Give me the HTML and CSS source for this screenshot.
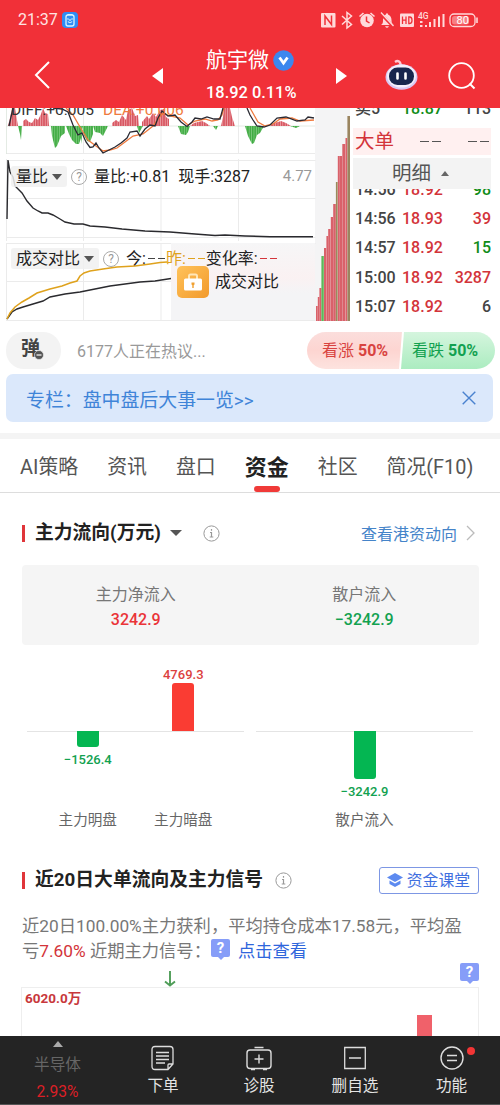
FILE: index.html
```html
<!DOCTYPE html>
<html lang="zh-CN">
<head>
    <meta charset="UTF-8">
    <meta name="viewport" content="width=device-width, initial-scale=1.0">
    <title>航宇微 18.92 0.11%</title>
    <link rel="stylesheet" href="styles.css">
</head>
<body>
    <header class="header">
        <div class="status">
            <span class="clock">21:37</span>
            <svg class="app-badge" width="16" height="16" viewBox="0 0 16 16">
                <rect width="16" height="16" rx="4" fill="#2f8cf5"/>
                <rect x="4" y="3" width="8" height="11" rx="2" fill="none" stroke="#d8f4ff" stroke-width="1.3"/>
                <path d="M5.5 2.5h5M5.5 6.5l1 1M10.5 6.5l-1 1M6 9.5q2 2.5 4 0M8 7v2" fill="none" stroke="#d8f4ff" stroke-width="1.2"/>
            </svg>
            <svg class="status-icons" width="160" height="20" viewBox="320 10 160 20">
                <g fill="#ffd9da">
                    <rect x="321" y="13" width="14.5" height="14.5" rx="1"/>
                    <path d="M325 25v-9l6.5 8.500v-9" fill="none" stroke="#f13038" stroke-width="1.5"/>
                    <path d="M342 16l9.5 8.500-4.500 3.500V12.500l4.500 3.500-9.500 8.500" fill="none" stroke="#ffd9da" stroke-width="1.5"/>
                    <circle cx="367" cy="20.5" r="6.8"/>
                    <path d="M359.500 16.500l4-3.500M374.500 16.500l-4-3.500" stroke="#ffd9da" stroke-width="1.6"/>
                    <path d="M366.500 16.500v4.500l3 2" fill="none" stroke="#f13038" stroke-width="1.5"/>
                    <path d="M381 25c2-1 2-3 2-5.500 0-3 1.500-4.500 3-5v-1h2v1c2.500 1 3.500 3 3.500 5.500 0 2 .5 4 2 5zM385 26.200h4q-2 3-4 0z"/>
                    <path d="M380 13l13.500 14" stroke="#f13038" stroke-width="2.6"/>
                    <path d="M381 12.500l12.500 13.500" stroke="#ffd9da" stroke-width="1.3"/>
                    <rect x="400" y="13.5" width="14" height="13.5" rx="1"/>
                    <path d="M402.500 16.500v7.500M406 16.500v7.500M402.500 20.200h3.500M408.800 17v6.500h1q2.200 0 2.200-3.200t-2.200-3.300z" fill="none" stroke="#f13038" stroke-width="1.3"/>
                    <path d="M420 21h2.500v2H420zM420 25h2.500v2H420zM425 25h2v2h-2zM429 22h2v5h-2zM433.500 19h2v8h-2zM438 16.500h2V27h-2zM442.500 14h2v13h-2z"/>
                    <rect x="450" y="14" width="25" height="12.5" rx="4" fill="none" stroke="#ffd9da" stroke-width="1.3"/>
                    <rect x="452" y="16" width="17" height="8.5" rx="2.5" fill="#f77f83"/>
                    <path d="M477 17.500v5.500" stroke="#ffd9da" stroke-width="1.6"/>
                </g>
                <text x="418" y="18.5" class="tiny-net">4G</text>
                <text x="456.500" y="24.2" class="tiny-batt">80</text>
            </svg>
        </div>
        <div class="titlebar">
            <svg width="18" height="30" viewBox="0 0 18 30"><path d="M16 2L3 15l13 13" fill="none" stroke="#fff" stroke-width="2"/></svg>
            <svg class="prev" width="11" height="16" viewBox="0 0 11 16"><path d="M11 0v16L0 8z" fill="#fff"/></svg>
            <div class="stock">
                <div class="name">航宇微
                    <svg width="21" height="21" viewBox="0 0 21 21">
                        <circle cx="10.5" cy="10.5" r="10.3" fill="#3c87ee"/>
                        <path d="M6.500 7.500l4 5.500 4-5.500" fill="none" stroke="#fff" stroke-width="2.8"/>
                    </svg>
                </div>
                <div class="quote">18.92 0.11%</div>
            </div>
            <svg class="next" width="11" height="16" viewBox="0 0 11 16"><path d="M0 0v16l11-8z" fill="#fff"/></svg>
            <svg class="robot" width="33" height="32" viewBox="0 0 33 32">
                <path d="M10 3q3-2 5 .5l1 3" fill="none" stroke="#ffc9d4" stroke-width="2.4"/>
                <ellipse cx="16.5" cy="18" rx="16" ry="12.8" fill="#d9c8f3"/>
                <ellipse cx="16.5" cy="17" rx="14.5" ry="11.5" fill="#f3effc"/>
                <rect x="4" y="8.5" width="25" height="17.5" rx="8.5" fill="#18264d"/>
                <path d="M12.500 14.500v5M20.500 14.500v5" stroke="#fff" stroke-width="2.6" stroke-linecap="round"/>
            </svg>
            <svg class="search" width="28" height="28" viewBox="0 0 28 28">
                <circle cx="13.5" cy="13.5" r="12.3" fill="none" stroke="#fff" stroke-width="1.8"/>
                <path d="M21.500 21.500l5 5" stroke="#fff" stroke-width="2"/>
            </svg>
        </div>
    </header>

    <section class="market">
        <div class="charts">
            <div class="panel macd">
                <svg class="plot" width="316" height="46" viewBox="0 108 316 46">
                    <defs>
                        <pattern id="gbar" width="2.4" height="10" patternUnits="userSpaceOnUse">
                            <rect width="2.4" height="10" fill="#7cc87c"/><rect width="1.5" height="10" fill="#3fab42"/>
                        </pattern>
                        <pattern id="rbar" width="2.4" height="10" patternUnits="userSpaceOnUse">
                            <rect width="2.4" height="10" fill="#eda0a6"/><rect width="1.6" height="10" fill="#d75862"/>
                        </pattern>
                    </defs>
                    <path d="M83.500 108v46M161 108v46M238.500 108v46M6 153.500h309.500" stroke="#ebebeb"/>
                    <path d="M6.500 154V108M6 126h309" stroke="#dde6dd" stroke-width=".8" fill="none"/>
                    <path fill="url(#rbar)" d="M8 126l2-8 2-10h3l2 12 1 6zM23 126v-5l3-2 3 3 3 1 3-5 3 2 3-6 2-6 2 5 3 1 1 12zM112 126v-3l4-3 3 2 3-7 4 5 2-10 4-2 3 8 3-1 1 11zM142 126v-4l5-6 2 3 4-6 3 4 4-7 4-1 2 8 3 2v7zM190 126l4-3 4-1 4-1 4 2 4 3zM221 126l2-9 1-9h6l2 9 3 9zM270 126l4-3 4-1 3-1 5 2 5 3z"/>
                    <path fill="url(#gbar)" d="M18 126l2 8 1 6 1-14zM51 126l1 10 3 12 2-2 4-10 4-3v-7zM66 126l3 8 3 6 4 4h3l2-6 1 6v-18zM82 126l2 9 3 6 3 1 3-8v-8zM93 126l2 6 5 1 3 3 2-4 3-6zM137 126h6l-4 7zM178 126l3 8 5 1 2-3 2-6zM245 126l3 10 4 8 2-1 3-8 3-2 4-7zM213 126h5l-2 4zM290 126h10l-4 2z"/>
                    <g fill="none" stroke-width="1.300">
                        <path stroke="#ef7a3e" d="M66 108L73 115 80 127 88 140 96 146 103 151 110 150 117 148 125 142 133 136 143 134 148 130 153 126 158 119 163 113 170 116 180 118 188 125 195 121 205 119 212 121 218 120 222 115 224 108M250 108L254 115 258 122 265 126 273 124 280 119 292 118 300 121 314 120"/>
                        <path stroke="#2a2a33" d="M9 126L13 108M53 108L62 109 68 112 73 125 78 135 82 133 86 142 90 147.500 93 147 96 143 99 148 103 153 109 150 115 147 121 143 127 138 130 132 137 131 140 136 145 129 150 125 155 126 158 118 162 111 168 116 175 115 181 122 187 126.500 192 122 195 118 201 119 207 117 214 119 220 119 223 108M247 108L250 115 253 120 257 126 264 127 270 125 277 118 286 117 297 121 305 120 308 117 314 118"/>
                    </g>
                </svg>
                <div class="macd-text"><span>DIFF:+0.005</span><span class="dea">DEA:+0.006</span></div>
            </div>

            <div class="panel ratio">
                <svg class="plot" width="316" height="82" viewBox="0 159 316 82">
                    <path d="M6.500 159v82M83.500 159v82M161 159v82M238.500 159v82M6 160.500h309.500M6 198.500h309.500M6 237.500h309.500" stroke="#ebebeb" fill="none"/>
                    <path fill="none" stroke="#2a2a2e" stroke-width="1.400" d="M7 219L8 160 10 172 13 177 15 186 22 193 27 201 33 208 38 211 42 213 48 213 53 215 60 219 65 222 74 224 83 224 90 226 105 227 122 229 145 231 170 232 195 234 215 235.500 225 235 245 236 270 236.700 313 236.700"/>
                </svg>
                <div class="legend">
                    <span class="picker">量比<i class="down"></i></span>
                    <span class="help">?</span>
                    <span>量比:+0.81</span>
                    <span class="hand">现手:3287</span>
                    <span class="max">4.77</span>
                </div>
            </div>

            <div class="panel compare">
                <svg class="plot" width="316" height="78" viewBox="0 243 316 78">
                    <path d="M6.500 243v78M83.500 243v78M161 243v78M6 243.500h309.500M6 281.500h165M6 320.500h309.500" stroke="#ebebeb" fill="none"/>
                    <path fill="none" stroke="#2a2a2e" stroke-width="1.400" d="M7 319L12 312 17 309 23 307 33 304 43 301 50 297 65 294 80 292 95 289 110 286 125 284 140 282 155 281 171 278.500"/>
                </svg>
                <div class="locked">
                    <span class="lock">
                        <svg width="32" height="32" viewBox="0 0 32 32">
                            <path d="M12 13v-3q0-1.500 1.500-1.500h5Q20 8.500 20 10v3" fill="none" stroke="#ffe6b8" stroke-width="2"/>
                            <rect x="7" y="12.5" width="18" height="12" rx="1.5" fill="#fff"/>
                            <path d="M14.500 16.500h3v2l-.8.800V22h-1.400v-2.700l-.8-.8z" fill="#f0a030"/>
                        </svg>
                    </span>
                    成交对比
                </div>
                <div class="legend">
                    <span class="picker">成交对比<i class="down"></i></span>
                    <span class="help">?</span>
                    <span class="line3">今:<em class="dash"></em><b class="yest">昨:</b><em class="dash gold"></em>变化率:<em class="dash red"></em></span>
                </div>
                <svg class="plot" width="171" height="78" viewBox="0 243 171 78">
                    <path fill="none" stroke="#dfa21d" stroke-width="1.500" d="M7 319L10 313 15 307 22 302 29 298 37 293 50 289 62 286 70 283 77 281 80 276 84 273 90 271 103 269 117 267 135 266 150 264 160 262.500 167 262"/>
                </svg>
            </div>
        </div>

        <svg class="depth" width="35" height="213" viewBox="315 108 35 213">
            <rect x="315" y="108" width="35" height="213" fill="#f4f4f5"/>
            <g fill="#d9616a">
                <rect x="316" y="306" width="1.7" height="15"/><rect x="317.800" y="297" width="1.6" height="24"/>
                <rect x="319.400" y="288" width="2" height="33"/>
                <rect x="324" y="248" width="2.2" height="73"/><rect x="326.400" y="236" width="1.8" height="85"/>
                <rect x="328.200" y="229" width="2.4" height="92"/><rect x="330.800" y="217" width="2.2" height="104"/>
                <rect x="333.200" y="204" width="2.6" height="117"/><rect x="337.800" y="156" width="2" height="165"/>
                <rect x="339.900" y="156" width="2.2" height="165"/><rect x="342.300" y="144" width="3" height="177"/>
                <rect x="345.500" y="138" width="1.8" height="183"/>
            </g>
            <rect x="321.400" y="256" width="2.4" height="65" fill="#5cb85a"/>
            <rect x="335.900" y="182" width="1.7" height="139" fill="#9a8a5c"/>
            <rect x="347.400" y="116" width="2.6" height="205" fill="#9a8560"/>
        </svg>

        <div class="orders">
            <div class="row top-row"><span>卖5</span><span class="g">18.87</span><span>113</span></div>
            <div class="big-order"><span>大单</span><em class="dash"></em><em class="dash"></em></div>
            <div class="detail">明细<i class="up"></i></div>
            <div class="trades">
                <div class="row"><span>14:56</span><span class="r">18.92</span><span class="g">98</span></div>
                <div class="row"><span>14:56</span><span class="r">18.93</span><span class="r">39</span></div>
                <div class="row"><span>14:57</span><span class="r">18.92</span><span class="g">15</span></div>
                <div class="row"><span>15:00</span><span class="r">18.92</span><span class="r">3287</span></div>
                <div class="row"><span>15:07</span><span class="r">18.92</span><span>6</span></div>
            </div>
        </div>
    </section>

    <section class="discuss">
        <div class="danmu">弹
            <svg width="10" height="10" viewBox="0 0 10 10"><circle cx="5" cy="5" r="4.5" fill="#555" stroke="#f3f3f3" stroke-width=".6"/><path d="M2.500 5h5" stroke="#fff" stroke-width="1.2"/></svg>
        </div>
        <div class="talk">6177人正在热议...</div>
        <div class="vote">
            <div class="bull">看涨 <b>50%</b></div>
            <div class="bear">看跌 <b>50%</b></div>
        </div>
    </section>

    <div class="banner">
        <span>专栏：盘中盘后大事一览&gt;&gt;</span>
        <svg width="14" height="14" viewBox="0 0 14 14"><path d="M.7.7l12.600 12.600M13.300.7L.7 13.300" stroke="#4a82cf" stroke-width="1.4"/></svg>
    </div>

    <nav class="tabs">
        <a>AI策略</a>
        <a>资讯</a>
        <a>盘口</a>
        <a class="active">资金</a>
        <a>社区</a>
        <a>简况(F10)</a>
    </nav>

    <section class="flow">
        <div class="heading">
            <h2>主力流向(万元)</h2>
            <i class="down"></i>
            <svg class="info" width="17" height="17" viewBox="0 0 17 17"><circle cx="8.5" cy="8.5" r="7.6" fill="none" stroke="#999" stroke-width="1"/><path d="M8.500 4v1.700M7 7.500h1.500v4M6.700 12h3.600" fill="none" stroke="#999" stroke-width="1.2"/></svg>
            <a class="more">查看港资动向
                <svg width="9" height="16" viewBox="0 0 9 16"><path d="M1 1l7 7-7 7" fill="none" stroke="#bbb" stroke-width="1.3"/></svg>
            </a>
        </div>
        <div class="summary">
            <div><p>主力净流入</p><strong class="red">3242.9</strong></div>
            <div><p>散户流入</p><strong class="green">−3242.9</strong></div>
        </div>
        <div class="bars">
            <div class="group">
                <div class="bar-col">
                    <div class="above"></div>
                    <div class="below"><i class="bar" style="height: 16px"></i><span>−1526.4</span></div>
                    <p>主力明盘</p>
                </div>
                <div class="bar-col">
                    <div class="above"><span>4769.3</span><i class="bar" style="height: 48px"></i></div>
                    <div class="below"></div>
                    <p>主力暗盘</p>
                </div>
            </div>
            <div class="group">
                <div class="bar-col">
                    <div class="above"></div>
                    <div class="below"><i class="bar" style="height: 48px"></i><span>−3242.9</span></div>
                    <p>散户流入</p>
                </div>
            </div>
        </div>
    </section>

    <section class="signal">
        <div class="heading">
            <h2>近20日大单流向及主力信号</h2>
            <svg class="info" width="17" height="17" viewBox="0 0 17 17"><circle cx="8.5" cy="8.5" r="7.6" fill="none" stroke="#999" stroke-width="1"/><path d="M8.500 4v1.700M7 7.500h1.500v4M6.700 12h3.600" fill="none" stroke="#999" stroke-width="1.2"/></svg>
            <a class="course">
                <svg width="16" height="14" viewBox="0 0 16 14"><path d="M8 0l8 4.500L8 9 0 4.500z" fill="#5d8af0"/><path d="M2.500 7.500L8 10.500l5.500-3v3.500L8 14l-5.500-3z" fill="#5d8af0"/></svg>
                资金课堂
            </a>
        </div>
        <div class="desc">
            <div class="line">近20日100.00%主力获利，平均持仓成本17.58元，平均盈</div>
            <div class="line second">亏<span class="red">7.60%</span> 近期主力信号：<i class="tip">?</i><a>点击查看</a></div>
        </div>
        <div class="marks">
            <svg width="12" height="16" viewBox="0 0 12 16"><path d="M6 0v14M1 10.500l5 4 5-4" fill="none" stroke="#4f9d58" stroke-width="1.9"/></svg>
            <i class="tip">?</i>
        </div>
        <div class="history">
            <span>6020.0万</span>
            <i class="day"></i>
        </div>
    </section>

    <footer class="toolbar">
        <div class="sector">
            <i class="up"></i>
            <span>半导体</span>
            <b>2.93%</b>
        </div>
        <div class="tool">
            <svg width="24" height="26" viewBox="0 0 24 26"><path d="M4 1.500h15q3 0 3 3V19l-5 5.500H4q-3 0-3-3v-17q0-3 3-3zM22 19h-4q-1 0-1 1v4M5 7.500h13M5 11h13M5 14.500h13M5 18h9" fill="none" stroke="#ddd" stroke-width="1.3"/></svg>
            下单
        </div>
        <div class="tool">
            <svg width="26" height="26" viewBox="0 0 26 26"><rect x="1" y="5" width="24" height="18.5" rx="3" fill="none" stroke="#ddd" stroke-width="1.4"/><path d="M8.500 2.500h9M13 9.500v9M8.500 14h9M5 24.500h4M17 24.500h4" stroke="#ddd" stroke-width="1.4"/></svg>
            诊股
        </div>
        <div class="tool">
            <svg width="24" height="26" viewBox="0 0 24 26"><path d="M1.700 2.500h20.600v21H1.700zM6 13h12" fill="none" stroke="#ddd" stroke-width="1.3"/></svg>
            删自选
        </div>
        <div class="tool">
            <svg width="26" height="26" viewBox="0 0 26 26"><circle cx="13" cy="13" r="11" fill="none" stroke="#ddd" stroke-width="1.4"/><path d="M8 10.500h10M8 15.500h10" stroke="#ddd" stroke-width="1.4"/></svg>
            功能
            <i class="dot"></i>
        </div>
    </footer>
</body>
</html>
```
FILE: styles.css
```css
* {
    margin: 0;
    padding: 0;
    box-sizing: border-box;
}
body {
    width: 500px;
    height: 1105px;
    overflow: hidden;
    background: #fff;
    color: #333;
    font-family: Roboto, "Noto Sans CJK SC", sans-serif;
    white-space: nowrap;
}
svg {
    display: block;
    flex-shrink: 0;
}
i, em {
    font-style: normal;
}
.red, .r {
    color: #d3343a;
}
.green {
    color: #12a150;
}
.g {
    color: #108c18;
}
.down, .up {
    display: block;
    border: 5px solid transparent;
    border-top: 6px solid #555;
    border-bottom: 0;
}
.up {
    border-top: 0;
    border-bottom: 6px solid #666;
}

/* header */
.header {
    height: 108px;
    background: #f13038;
    color: #fff;
}
.status {
    height: 40px;
    padding: 0 20px 0 18px;
    display: flex;
    align-items: center;
}
.clock {
    font-size: 16px;
    line-height: 20px;
    color: #ffe3e3;
    width: 44px;
}
.status-icons {
    margin-left: auto;
}
.tiny-net {
    font-size: 8.5px;
    fill: #ffd9da;
    font-weight: 500;
}
.tiny-batt {
    font-size: 11px;
    fill: #fff;
}
.titlebar {
    height: 68px;
    padding: 3px 24px 0 33px;
    display: flex;
    align-items: flex-start;
}
.titlebar > svg {
    margin-top: 17px;
}
.titlebar .prev {
    margin: 25px 0 0 101px;
}
.stock {
    width: 131px;
    margin-left: 43px;
}
.name {
    display: flex;
    gap: 4px;
    font-size: 21px;
    line-height: 35px;
    height: 40px;
}
.name svg {
    margin-top: 7px;
}
.quote {
    font-size: 16.4px;
    line-height: 20px;
    font-weight: 500;
}
.titlebar .next {
    margin-top: 25px;
}
.titlebar .robot {
    margin: 16px 0 0 38px;
}
.titlebar .search {
    margin: 19px 0 0 30px;
}

/* charts and order list */
.market {
    height: 213px;
    display: flex;
    overflow: hidden;
}
.charts {
    width: 315px;
}
.panel {
    position: relative;
}
.plot {
    position: absolute;
    left: 0;
    top: 0;
}
.macd {
    height: 51px;
    overflow: hidden;
}
.ratio {
    height: 84px;
}
.compare {
    height: 78px;
}
.macd-text {
    position: relative;
    display: flex;
    gap: 9px;
    margin-top: -8px;
    padding-left: 11px;
    font-size: 15.5px;
    line-height: 20px;
}
.dea {
    color: #ef7a3e;
}
.legend {
    position: relative;
    display: flex;
    align-items: center;
    padding: 7px 3px 0 11px;
    font-size: 16px;
    line-height: 21px;
    color: #222;
}
.compare .legend {
    padding-top: 5px;
}
.picker {
    display: flex;
    align-items: center;
    gap: 4px;
    padding: 0 5px;
    background: rgba(240, 240, 240, 0.85);
    border-radius: 3px;
    margin-right: 4px;
}
.help {
    width: 16px;
    height: 16px;
    border: 1px solid #aaa;
    border-radius: 50%;
    color: #999;
    font-size: 12px;
    line-height: 15px;
    text-align: center;
    margin-right: 7px;
}
.hand {
    margin-left: 8px;
}
.max {
    margin-left: auto;
    color: #999;
    font-size: 15px;
}
.line3 {
    display: flex;
    align-items: center;
}
.yest {
    color: #dfa21d;
    font-weight: 400;
}
.dash {
    display: inline-block;
    width: 20px;
    height: 1.5px;
    background: repeating-linear-gradient(90deg, transparent 0 2px, #444 2px 9px, transparent 9px 10px);
}
.dash.gold {
    background: repeating-linear-gradient(90deg, transparent 0 2px, #dfa21d 2px 9px, transparent 9px 10px);
}
.dash.red {
    background: repeating-linear-gradient(90deg, transparent 0 2px, #d3343a 2px 9px, transparent 9px 10px);
}
.locked {
    position: absolute;
    left: 171px;
    top: 0;
    width: 144px;
    height: 77px;
    padding: 23px 0 0 6px;
    display: flex;
    gap: 6px;
    font-size: 16px;
    line-height: 31px;
    color: #222;
    background: linear-gradient(#f6f6f7, #faf1f2 45%, #f4f4f6 65%);
}
.lock {
    width: 32px;
    height: 32px;
    border-radius: 5px;
    background: linear-gradient(135deg, #ffc25a, #f29a2c);
}
.orders {
    width: 138px;
    margin-left: 3px;
}
.row {
    display: grid;
    grid-template-columns: 47px 48px 1fr;
    height: 29.2px;
    line-height: 29.2px;
    flex-shrink: 0;
    padding-left: 2px;
    font-size: 16px;
    font-weight: 500;
    color: #444;
}
.row span:last-child {
    text-align: right;
}
.top-row {
    height: 20px;
    line-height: 1px;
}
.big-order {
    height: 27px;
    padding-left: 2px;
    display: flex;
    align-items: center;
    background: #fff0f0;
    color: #d3343a;
    font-size: 19.5px;
    line-height: 26px;
}
.big-order .dash {
    width: 22px;
    height: 1.8px;
    background: repeating-linear-gradient(90deg, #555 0 9px, transparent 9px 12px);
    margin-left: 26px;
}
.detail {
    height: 31px;
    margin-top: 3px;
    padding-left: 39px;
    display: flex;
    align-items: center;
    gap: 10px;
    background: #f3f3f3;
    color: #555;
    font-size: 19.5px;
    line-height: 30px;
}
.detail .up {
    border-width: 0 4px 5px;
}
.trades {
    height: 132px;
    display: flex;
    flex-direction: column;
    justify-content: flex-end;
    overflow: hidden;
}

/* discussion */
.discuss {
    display: flex;
    height: 37px;
    margin: 11px 5px 0 6px;
    line-height: 37px;
}
.danmu {
    position: relative;
    width: 55px;
    padding-left: 15px;
    border-radius: 18px;
    background: #f3f3f3;
    color: #444;
    font-size: 19px;
    font-weight: 700;
    line-height: 34px;
}
.danmu svg {
    position: absolute;
    left: 28px;
    top: 18px;
}
.talk {
    margin-left: 16px;
    color: #999;
    font-size: 16px;
    line-height: 39px;
}
.vote {
    display: flex;
    margin-left: auto;
    width: 188px;
    border-radius: 19px;
    overflow: hidden;
    font-size: 16px;
}
.bull {
    width: 95px;
    padding-left: 15px;
    color: #d8433f;
    background: linear-gradient(#fbdedc, #fdd5d1 50%, #fde3df);
    clip-path: polygon(0 0, 100% 0, 92px 100%, 0 100%);
}
.bear {
    width: 95px;
    margin-left: -2px;
    padding-left: 12px;
    color: #12a150;
    background: linear-gradient(#d5f5de, #abecc0);
    clip-path: polygon(4px 0, 100% 0, 100% 100%, 1px 100%);
}
.banner {
    height: 48px;
    margin: 5px 7px 0 6px;
    padding: 0 17px 0 20px;
    display: flex;
    align-items: center;
    justify-content: space-between;
    border-radius: 7px;
    background: #dbe8fb;
    color: #3f84d8;
    font-size: 18.9px;
    line-height: 44px;
}
.banner span {
    padding-top: 5px;
}

/* tabs */
.tabs {
    height: 60px;
    margin-top: 11px;
    padding: 0 20px;
    display: flex;
    gap: 29px;
    border-top: 6px solid #f4f4f4;
    border-bottom: 1px solid #ddd;
    color: #555;
    font-size: 19.9px;
    line-height: 57px;
}
.tabs a {
    position: relative;
}
.tabs .active {
    color: #222;
    font-size: 22px;
    font-weight: 700;
}
.active::after {
    content: "";
    position: absolute;
    left: 9px;
    bottom: 0;
    width: 26px;
    height: 6px;
    border-radius: 3px;
    background: #f03a38;
}

/* fund flow */
.heading {
    height: 30px;
    display: flex;
    align-items: center;
    padding: 0 21px 0 22px;
}
.heading h2 {
    color: #222;
    font-size: 18.8px;
    line-height: 30px;
    font-weight: 700;
    display: flex;
    align-items: center;
}
.heading h2::before {
    content: "";
    width: 3px;
    height: 17px;
    margin-right: 10px;
    background: #e0353a;
}
.heading .down {
    border-width: 6px 6px 0;
    margin: 0 0 0 9px;
}
.flow .info {
    margin-left: 21px;
}
.signal .info {
    margin-left: 12px;
}
.flow {
    padding-top: 25px;
}
.more {
    margin-left: auto;
    margin-right: 4px;
    display: flex;
    align-items: center;
    gap: 9px;
    color: #4584c9;
    font-size: 16px;
}
.summary {
    display: flex;
    height: 80px;
    margin: 17px 21.5px 0;
    border-radius: 4px;
    background: #f5f5f5;
    text-align: center;
}
.summary div {
    flex: 1;
    padding-top: 17px;
}
.summary p {
    color: #777;
    font-size: 16px;
    line-height: 25px;
}
.summary strong {
    display: block;
    font-size: 16px;
    line-height: 25px;
    font-weight: 500;
}
.summary .red {
    color: #ea3438;
}
.bars {
    display: flex;
    gap: 12px;
    padding: 20px 27px 0;
    height: 220px;
}
.group {
    width: 217px;
    display: flex;
    justify-content: center;
    background: linear-gradient(#e4e4e4, #e4e4e4) 0 66px / 100% 1px no-repeat;
}
.bar-col {
    width: 95.5px;
    display: flex;
    flex-direction: column;
    align-items: center;
    font-size: 13px;
    font-weight: 500;
}
.above {
    height: 66px;
    display: flex;
    flex-direction: column;
    align-items: center;
    justify-content: flex-end;
    color: #dc3f3e;
    line-height: 17px;
}
.below {
    height: 76px;
    display: flex;
    flex-direction: column;
    align-items: center;
    color: #12a150;
    line-height: 25px;
}
.bar {
    width: 22px;
    border-radius: 3px 3px 0 0;
    background: #fa3c33;
}
.below .bar {
    border-radius: 0 0 3px 3px;
    background: #04b652;
}
.bar-col p {
    color: #666;
    font-size: 14.6px;
    font-weight: 400;
    line-height: 26px;
}

/* main force signal */
.course {
    margin-left: auto;
    height: 27px;
    display: flex;
    align-items: center;
    gap: 4px;
    padding: 0 8px 0 7px;
    border: 1px solid #7d97e4;
    border-radius: 3px;
    color: #3f6fe0;
    font-size: 15.8px;
    line-height: 25px;
}
.desc {
    padding: 18px 22px 0;
    color: #777;
    font-size: 17.3px;
}
.line {
    height: 25px;
    line-height: 26px;
}
.second {
    display: flex;
    white-space: pre;
}
.desc a {
    color: #2f66dc;
    margin-left: 8px;
}
.tip {
    position: relative;
    display: block;
    width: 19px;
    height: 18px;
    margin-top: 1px;
    border-radius: 2px;
    background: #869df8;
    color: #fff;
    font-size: 15px;
    font-weight: 700;
    line-height: 19px;
    text-align: center;
}
.tip::after {
    content: "";
    position: absolute;
    left: 7px;
    top: 18px;
    border: 3px solid transparent;
    border-top-color: #869df8;
    border-bottom: 0;
}
.marks {
    display: flex;
    justify-content: space-between;
    height: 24px;
    padding: 0 21px 0 164px;
}
.marks svg {
    margin-top: 8px;
}
.marks .tip {
    margin-top: 0;
}
.history {
    display: flex;
    justify-content: space-between;
    height: 49px;
    margin: 0 21px;
    padding: 0 46px 0 3px;
    border: 1px solid #eee;
    border-bottom: 0;
    color: #c8383c;
    font-size: 13.5px;
    font-weight: 700;
    line-height: 21px;
}
.day {
    width: 15px;
    height: 21px;
    margin-top: 27px;
    background: #f0616a;
}

/* bottom bar */
.toolbar {
    height: 69px;
    display: grid;
    grid-template-columns: 115px 96px 96px 96px 97px;
    background: #242424;
    border-bottom: 1px solid #555;
}
.sector, .tool {
    position: relative;
    display: flex;
    flex-direction: column;
    align-items: center;
    color: #e4e4e4;
    font-size: 15.6px;
    line-height: 24px;
}
.tool {
    padding-top: 9px;
    gap: 3px;
}
.sector .up {
    margin-top: 5px;
    border-bottom-color: #aaa;
}
.sector span {
    margin-top: 6px;
    color: #666;
}
.sector b {
    margin-top: 3px;
    color: #dc1f26;
    font-weight: 400;
}
.dot {
    position: absolute;
    right: 25px;
    top: 11px;
    width: 8px;
    height: 8px;
    border-radius: 50%;
    background: #f23535;
}
```
